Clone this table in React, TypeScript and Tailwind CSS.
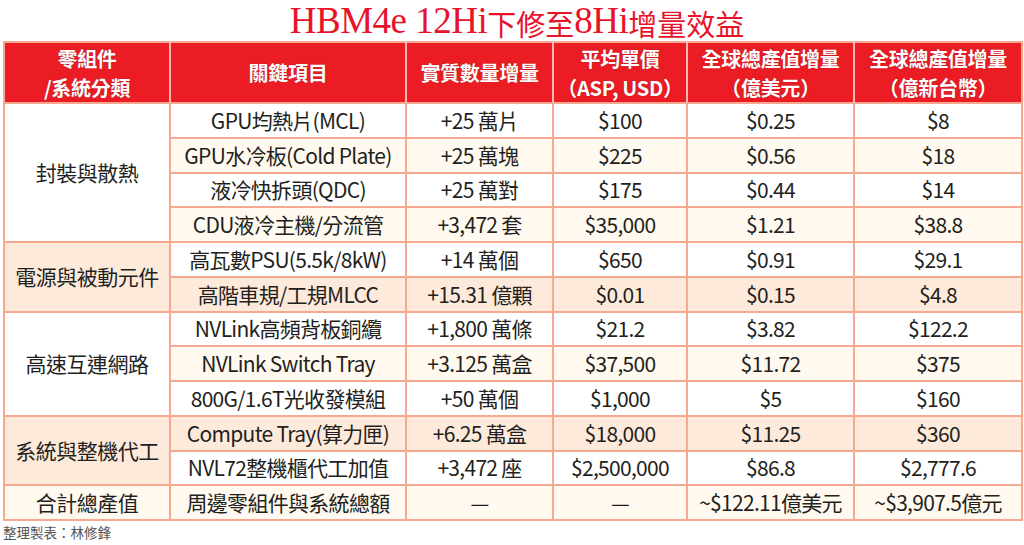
const rows: {
  group?: { name: string; span: number; bg: string };
  item: string;
  qty: string;
  asp: string;
  usd: string;
  twd: string;
  bg: string;
}[] = [
  { group: { name: "封裝與散熱", span: 4, bg: "bg-white" }, item: "GPU均熱片(MCL)", qty: "+25 萬片", asp: "$100", usd: "$0.25", twd: "$8", bg: "bg-white" },
  { item: "GPU水冷板(Cold Plate)", qty: "+25 萬塊", asp: "$225", usd: "$0.56", twd: "$18", bg: "bg-[#fff9ef]" },
  { item: "液冷快拆頭(QDC)", qty: "+25 萬對", asp: "$175", usd: "$0.44", twd: "$14", bg: "bg-white" },
  { item: "CDU液冷主機/分流管", qty: "+3,472 套", asp: "$35,000", usd: "$1.21", twd: "$38.8", bg: "bg-[#fff9ef]" },
  { group: { name: "電源與被動元件", span: 2, bg: "bg-[#fdeadb]" }, item: "高瓦數PSU(5.5k/8kW)", qty: "+14 萬個", asp: "$650", usd: "$0.91", twd: "$29.1", bg: "bg-white" },
  { item: "高階車規/工規MLCC", qty: "+15.31 億顆", asp: "$0.01", usd: "$0.15", twd: "$4.8", bg: "bg-[#fdeadb]" },
  { group: { name: "高速互連網路", span: 3, bg: "bg-white" }, item: "NVLink高頻背板銅纜", qty: "+1,800 萬條", asp: "$21.2", usd: "$3.82", twd: "$122.2", bg: "bg-white" },
  { item: "NVLink Switch Tray", qty: "+3.125 萬盒", asp: "$37,500", usd: "$11.72", twd: "$375", bg: "bg-[#fff9ef]" },
  { item: "800G/1.6T光收發模組", qty: "+50 萬個", asp: "$1,000", usd: "$5", twd: "$160", bg: "bg-white" },
  { group: { name: "系統與整機代工", span: 2, bg: "bg-[#fdeadb]" }, item: "Compute Tray(算力匣)", qty: "+6.25 萬盒", asp: "$18,000", usd: "$11.25", twd: "$360", bg: "bg-[#fdeadb]" },
  { item: "NVL72整機櫃代工加值", qty: "+3,472 座", asp: "$2,500,000", usd: "$86.8", twd: "$2,777.6", bg: "bg-white" },
  { group: { name: "合計總產值", span: 1, bg: "bg-[#fff9ef]" }, item: "周邊零組件與系統總額", qty: "—", asp: "—", usd: "~$122.11億美元", twd: "~$3,907.5億元", bg: "bg-[#fff9ef]" },
];

const cjk = "font-['Noto_Sans_CJK_TC',sans-serif]";

// header lines; a one-element array means the line is wrapped in full-width parens
const headers: (string | [string])[][] = [
  ["零組件", "/系統分類"],
  ["關鍵項目"],
  ["實質數量增量"],
  ["平均單價", ["ASP, USD"]],
  ["全球總產值增量", ["億美元"]],
  ["全球總產值增量", ["億新台幣"]],
];

function Paren({ children }: { children: string }) {
  return <span className="inline-block w-[20px] text-center">{children}</span>;
}

export default function App() {
  return (
    <div className="w-[1024px] h-[545px] bg-white overflow-hidden">
      {/* title */}
      <div className="h-[41px] flex items-end justify-center pb-[2px] pl-[10px] text-[#e8132b] leading-none">
        <span className="font-['Liberation_Serif',serif] text-[37px] tracking-[-0.5px]">HBM4e 12Hi</span>
        <span className={`${cjk} text-[29px] mb-[1px]`}>下修至</span>
        <span className="font-['Liberation_Serif',serif] text-[37px] tracking-[-0.5px]">8Hi</span>
        <span className={`${cjk} text-[29px] mb-[1px]`}>增量效益</span>
      </div>

      <div className="px-[3px]">
        <table className={`w-[1018px] table-fixed border-collapse ${cjk} text-[#231f20]`}>
          <colgroup>
            <col className="w-[166px]" />
            <col className="w-[236px]" />
            <col className="w-[147px]" />
            <col className="w-[134px]" />
            <col className="w-[167px]" />
            <col className="w-[168px]" />
          </colgroup>
          <thead>
            <tr className="h-[61px] bg-[#ec1c24] text-white font-bold text-[20px] [text-shadow:0_0_1px_rgba(90,0,0,0.6)]">
              {headers.map((lines, i) => (
                <th
                  key={i}
                  className="border-2 border-[#f6a990] border-l-[#f8b9ae] border-r-[#f8b9ae] first:border-l-[#f6a990] last:border-r-[#f6a990] whitespace-nowrap"
                >
                  {lines.map((l, j) => (
                    <div key={j} className="leading-[29px] tracking-[-0.3px]">
                      {typeof l === "string" ? (
                        l
                      ) : (
                        <>
                          <Paren>（</Paren>
                          {l[0]}
                          <Paren>）</Paren>
                        </>
                      )}
                    </div>
                  ))}
                </th>
              ))}
            </tr>
          </thead>
          <tbody className="text-[21px] leading-none">
            {rows.map((r, i) => (
              <tr key={i} className={`h-[34.75px] ${r.bg}`}>
                {r.group && (
                  <td rowSpan={r.group.span} className={`${r.group.bg} border-2 border-[#f6a990] text-center tracking-[-0.5px]`}>
                    {r.group.name}
                  </td>
                )}
                <td className="border-2 border-[#f6a990] text-center whitespace-nowrap tracking-[-0.7px]">{r.item}</td>
                <td className="border-2 border-[#f6a990] text-center whitespace-nowrap tracking-[-0.7px]">{r.qty}</td>
                <td className="border-2 border-[#f6a990] text-center whitespace-nowrap tracking-[-0.7px]">{r.asp}</td>
                <td className="border-2 border-[#f6a990] text-center whitespace-nowrap tracking-[-0.7px]">{r.usd}</td>
                <td className="border-2 border-[#f6a990] text-center whitespace-nowrap tracking-[-0.7px]">{r.twd}</td>
              </tr>
            ))}
          </tbody>
        </table>
        <div className={`${cjk} text-[13.5px] text-[#555] mt-[5px] leading-none`}>整理製表：林修鋒</div>
      </div>
    </div>
  );
}
